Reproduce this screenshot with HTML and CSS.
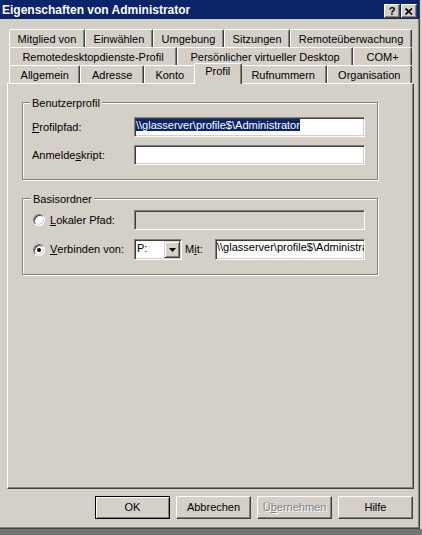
FILE: index.html
```html
<!DOCTYPE html>
<html lang="de">
<head>
  <meta charset="UTF-8">
  <title>Eigenschaften von Administrator</title>
  <link rel="stylesheet" href="styles.css">
</head>
<body>
  <div class="fenster">
    <div class="titelleiste">
      <span class="titel">Eigenschaften von Administrator</span>
      <span class="titel-knoepfe">
        <span class="titel-knopf">?</span>
        <span class="titel-knopf">
          <svg width="8" height="7" viewBox="0 0 8 7"><path d="M0.5 0.5 L7 6.5 M7 0.5 L0.5 6.5" stroke="#000" stroke-width="1.7" fill="none"/></svg>
        </span>
      </span>
    </div>

    <div class="register">
      <div class="reiter-zeile">
        <div class="reiter">Mitglied von</div>
        <div class="reiter">Einwählen</div>
        <div class="reiter">Umgebung</div>
        <div class="reiter">Sitzungen</div>
        <div class="reiter">Remoteüberwachung</div>
      </div>
      <div class="reiter-zeile">
        <div class="reiter">Remotedesktopdienste-Profil</div>
        <div class="reiter">Persönlicher virtueller Desktop</div>
        <div class="reiter">COM+</div>
      </div>
      <div class="reiter-zeile">
        <div class="reiter">Allgemein</div>
        <div class="reiter">Adresse</div>
        <div class="reiter">Konto</div>
        <div class="reiter aktiv">Profil</div>
        <div class="reiter">Rufnummern</div>
        <div class="reiter">Organisation</div>
      </div>

      <div class="seite">
        <div class="gruppe gruppe-profil">
          <div class="gruppe-titel">Benutzerprofil</div>
          <div class="zeile erste">
            <label class="beschriftung"><u>P</u>rofilpfad:</label>
            <div class="feld"><span class="markiert">\\glasserver\profile$\Administrator</span></div>
          </div>
          <div class="zeile zweite">
            <label class="beschriftung">Anmelde<u>s</u>kript:</label>
            <div class="feld"></div>
          </div>
        </div>

        <div class="gruppe gruppe-ordner">
          <div class="gruppe-titel">Basisordner</div>
          <div class="zeile erste">
            <label class="beschriftung option"><span class="radio"></span><u>L</u>okaler Pfad:</label>
            <div class="feld gesperrt"></div>
          </div>
          <div class="zeile zweite hoch">
            <label class="beschriftung option"><span class="radio an"></span><u>V</u>erbinden von:</label>
            <div class="auswahl">
              <span class="auswahl-wert">P:</span>
              <span class="auswahl-knopf">
                <svg width="7" height="4" viewBox="0 0 7 4"><path d="M0 0 H7 L3.5 4 Z" fill="#000"/></svg>
              </span>
            </div>
            <label class="mit">M<u>i</u>t:</label>
            <div class="feld">\\glasserver\profile$\Administrator</div>
          </div>
        </div>
      </div>
    </div>

    <div class="knoepfe">
      <button class="knopf standard">OK</button>
      <button class="knopf">Abbrechen</button>
      <button class="knopf" disabled>Ü<u>b</u>ernehmen</button>
      <button class="knopf">Hilfe</button>
    </div>
  </div>
</body>
</html>
```

FILE: styles.css
```css
/* Farben der klassischen Fensteroberfläche */
:root {
  --flaeche: #d4d0c8;
  --hell: #ffffff;
  --schatten: #808080;
  --dunkel: #404040;
  --titel: #0a246a;
  --markierung: #0a246a;
}

* {
  box-sizing: border-box;
}

html {
  background: #737373;
}

body {
  margin: 0;
  background: var(--flaeche);
  font: 11px/13px "Liberation Sans", Arial, sans-serif;
  color: #000;
}

.fenster {
  width: 420px;
  height: 529px;
  background: var(--flaeche);
  border-right: 1px solid var(--dunkel);
  border-bottom: 1px solid var(--dunkel);
  box-shadow: inset -1px -1px var(--schatten);
}

/* Titelleiste */
.titelleiste {
  height: 19px;
  display: flex;
  justify-content: space-between;
  align-items: flex-start;
  padding: 3px 2px 0 2px;
  background: var(--titel);
  color: var(--hell);
  font-weight: bold;
  font-size: 12px;
  line-height: 14px;
}

.titel-knoepfe {
  display: flex;
  gap: 1px;
  margin-top: 1px;
}

.titel-knopf {
  width: 16px;
  height: 14px;
  display: flex;
  align-items: center;
  justify-content: center;
  background: var(--flaeche);
  border: 1px solid;
  border-color: var(--hell) var(--dunkel) var(--dunkel) var(--hell);
  box-shadow: inset -1px -1px var(--schatten);
  color: #000;
  font-size: 11px;
  line-height: 11px;
}

/* Registerkarten */
.register {
  margin: 10px 0 0 7px;
  width: 407px;
}

.reiter-zeile {
  display: flex;
  height: 18px;
  margin: 0 2px;
}

.reiter {
  flex: 1 1 auto;
  height: 18px;
  padding: 3px 7px 1px;
  border: 1px solid;
  border-bottom: 0;
  border-color: var(--hell) var(--dunkel) transparent var(--hell);
  border-radius: 2px 2px 0 0;
  box-shadow: inset -1px 0 var(--schatten);
  background: var(--flaeche);
  text-align: center;
  white-space: nowrap;
}

.reiter.aktiv {
  position: relative;
  z-index: 1;
  height: 21px;
  margin: -2px -2px 0;
  padding-top: 1px;
}

.seite {
  height: 406px;
  padding: 18px 0 0 14px;
  border: 1px solid;
  border-color: var(--hell) var(--dunkel) var(--dunkel) var(--hell);
  box-shadow: inset -1px -1px var(--schatten);
}

/* Gruppenrahmen */
.gruppe {
  width: 356px;
  border: 1px solid var(--schatten);
  box-shadow: inset 1px 1px var(--hell), 1px 1px var(--hell);
  padding: 0 12px 14px 9px;
}

.gruppe-titel {
  width: fit-content;
  margin: -6px 0 0 -2px;
  padding: 0 2px;
  background: var(--flaeche);
}

.gruppe-profil .zeile.erste {
  margin-top: 7px;
}

.gruppe-ordner {
  margin-top: 18px;
  padding-left: 10px;
}

.gruppe-ordner .zeile.erste {
  margin-top: 4px;
}

.zeile {
  display: flex;
  align-items: center;
  height: 20px;
}

.zeile.zweite {
  margin-top: 8px;
}

.zeile.hoch {
  height: 21px;
  margin-top: 9px;
}

.beschriftung {
  flex: none;
  width: 102px;
}

.beschriftung.option {
  display: flex;
  align-items: center;
  width: 101px;
}

/* Eingabefelder */
.feld {
  flex: 1;
  height: 100%;
  padding: 1px 1px 0;
  background: var(--hell);
  border: 1px solid;
  border-color: var(--schatten) var(--hell) var(--hell) var(--schatten);
  box-shadow: inset 1px 1px var(--dunkel), inset -1px -1px var(--flaeche);
  white-space: nowrap;
  overflow: hidden;
}

.feld.gesperrt {
  background: var(--flaeche);
}

.markiert {
  background: var(--markierung);
  color: var(--hell);
}

.radio {
  position: relative;
  width: 12px;
  height: 12px;
  margin-right: 5px;
  border-radius: 50%;
  background: var(--hell);
  border: 1px solid;
  border-color: var(--schatten) var(--hell) var(--hell) var(--schatten);
  box-shadow: inset 1px 1px var(--dunkel), inset -1px -1px var(--flaeche);
}

.radio.an::after {
  content: "";
  position: absolute;
  left: 3px;
  top: 3px;
  width: 4px;
  height: 4px;
  border-radius: 50%;
  background: #000;
}

.auswahl {
  display: flex;
  width: 48px;
  height: 100%;
  padding: 1px;
  background: var(--hell);
  border: 1px solid;
  border-color: var(--schatten) var(--hell) var(--hell) var(--schatten);
  box-shadow: inset 1px 1px var(--dunkel), inset -1px -1px var(--flaeche);
}

.auswahl-wert {
  flex: 1;
  padding: 1px 0 0 1px;
}

.auswahl-knopf {
  width: 16px;
  display: flex;
  align-items: center;
  justify-content: center;
  background: var(--flaeche);
  border: 1px solid;
  border-color: var(--flaeche) var(--dunkel) var(--dunkel) var(--flaeche);
  box-shadow: inset 1px 1px var(--hell), inset -1px -1px var(--schatten);
}

.mit {
  flex: none;
  width: 30px;
  margin-left: 3px;
}

/* Schaltflächen unten */
.knoepfe {
  display: flex;
  justify-content: flex-end;
  gap: 6px;
  width: 413px;
  margin-top: 7px;
}

.knopf {
  width: 75px;
  height: 23px;
  padding: 0;
  background: var(--flaeche);
  border: 1px solid;
  border-color: var(--hell) var(--dunkel) var(--dunkel) var(--hell);
  box-shadow: inset -1px -1px var(--schatten);
  font: inherit;
  color: #000;
  text-align: center;
}

.knopf.standard {
  border-color: #000;
  box-shadow: inset 1px 1px var(--hell), inset -1px -1px var(--schatten);
}

.knopf:disabled {
  color: var(--schatten);
  text-shadow: 1px 1px var(--hell);
}
```
